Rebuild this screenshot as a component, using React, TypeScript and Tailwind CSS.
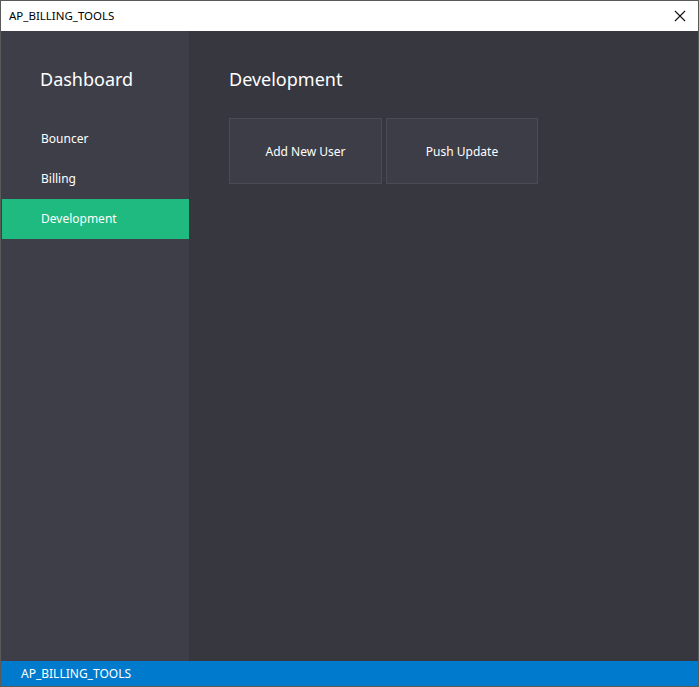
import React from 'react';

const menu = ['Bouncer', 'Billing', 'Development'];

export default function App() {
    const active = 'Development';

    return (
        <div className="w-[699px] h-[687px] flex flex-col border border-[#5a5a5a] bg-white overflow-hidden" style={{ fontFamily: '"Noto Sans", "Open Sans", sans-serif' }}>
            {/* title bar */}
            <div className="h-[30px] flex items-center justify-between pl-2 pr-2 bg-white text-black">
                <span className="text-[11.5px]">AP_BILLING_TOOLS</span>
                <svg width="12" height="12" viewBox="0 0 12 12" className="mr-1">
                    <path d="M1 1 L11 11 M11 1 L1 11" stroke="#111" strokeWidth="1.1" />
                </svg>
            </div>

            <div className="flex flex-1 min-h-0">
                {/* sidebar */}
                <div className="w-[189px] bg-[#3e3e48] flex flex-col pt-[39px] pl-px border-r border-[#34343c]">
                    <h2 className="text-[18px] text-white pl-[38px] leading-none mb-[31px]">Dashboard</h2>
                    <nav className="flex flex-col">
                        {menu.map((m) => (
                            <div
                                key={m}
                                className={
                                    'h-[40px] flex items-center pl-[39px] text-[12px] text-white ' +
                                    (m === active ? 'bg-[#1eba80]' : '')
                                }
                            >
                                {m}
                            </div>
                        ))}
                    </nav>
                </div>

                {/* main */}
                <div className="flex-1 bg-[#373740] pl-[39px] pt-[39px]">
                    <h1 className="text-[18px] text-white leading-none mb-[30px]">Development</h1>
                    <div className="flex gap-[4px]">
                        <button className="w-[153px] h-[66px] pt-[2px] bg-[#3d3d47] border border-[#4b4b55] text-white text-[12px]">Add New User</button>
                        <button className="w-[152px] h-[66px] pt-[2px] bg-[#3d3d47] border border-[#4b4b55] text-white text-[12px]">Push Update</button>
                    </div>
                </div>
            </div>

            {/* status bar */}
            <div className="h-[25px] bg-[#007acc] flex items-center pl-[20px] text-white text-[12px]">AP_BILLING_TOOLS</div>
        </div>
    );
}
